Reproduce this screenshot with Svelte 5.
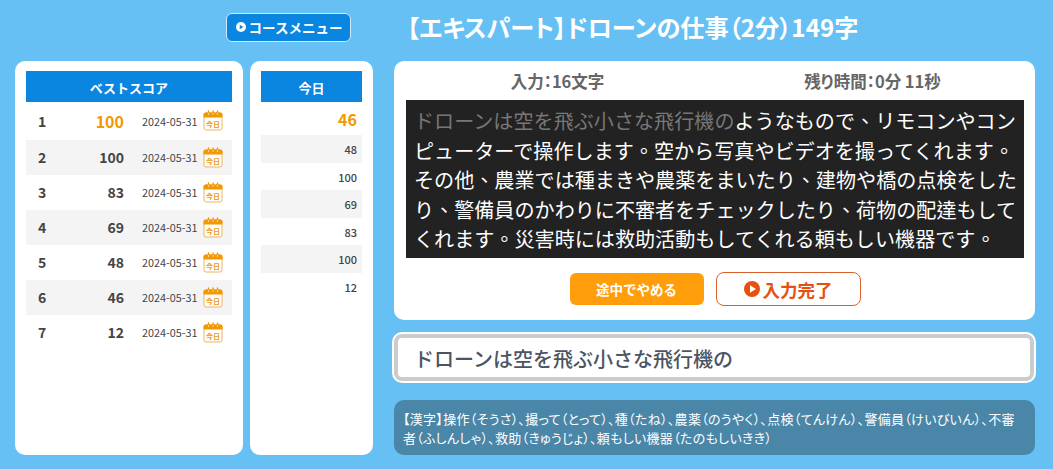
<script>
  const best = [
    [1, 100], [2, 100], [3, 83], [4, 69], [5, 48], [6, 46], [7, 12]
  ];
  const today = [48, 100, 69, 83, 100, 12];
</script>

{#snippet cal()}
  <svg class="cal" viewBox="0 0 20 21" width="20" height="21" aria-hidden="true">
    <rect x="1" y="3" width="18" height="17" rx="2" fill="#fff" stroke="#efb55a" stroke-width="1" />
    <path d="M.5 7.500V4.500Q.5 2.500 2.500 2.500H17.500Q19.500 2.500 19.500 4.500V7.500Z" fill="#f39800" />
    <path d="M5.500 1V4M10 1V4M14.500 1V4" stroke="#f39800" stroke-width="1.400" stroke-linecap="round" />
    <path d="M5.500 3V5M10 3V5M14.500 3V5" stroke="#fff" stroke-width=".6" />
    <text x="10" y="16.500" text-anchor="middle" class="caltext">今日</text>
  </svg>
{/snippet}

<div class="page">
  <header class="top">
    <button class="menu">
      <svg viewBox="0 0 12 12" width="10" height="10" aria-hidden="true">
        <circle cx="6" cy="6" r="6" fill="#fff" />
        <path d="M4.500 3.300L8.800 6L4.500 8.700Z" fill="#0a85e0" />
      </svg>
      コースメニュー
    </button>
    <h1>【エキスパート】ドローンの仕事（2分）149字</h1>
  </header>

  <div class="body">
    <section class="card scores">
      <div class="head">ベストスコア</div>
      {#each best as [rank, score], i}
        <div class="row" class:first={i === 0}>
          <span class="rank">{rank}</span>
          <span class="score">{score}</span>
          <span class="date">2024-05-31</span>
          {@render cal()}
        </div>
      {/each}
    </section>

    <section class="card todays">
      <div class="head">今日</div>
      <div class="tfirst">46</div>
      {#each today as v}
        <div class="trow">{v}</div>
      {/each}
    </section>

    <main class="right">
      <section class="card game">
        <div class="stats">
          <span>入力：16文字</span>
          <span>残り時間：0分 11秒</span>
        </div>
        <p class="text" lang="zh-Hant"><span class="done">ドローンは空を飛ぶ小さな飛行機の</span>ようなもので、リモコンやコンピューターで操作します。空から写真やビデオを撮ってくれます。その他、農業では種まきや農薬をまいたり、建物や橋の点検をしたり、警備員のかわりに不審者をチェックしたり、荷物の配達もしてくれます。災害時には救助活動もしてくれる頼もしい機器です。</p>
        <div class="actions">
          <button class="stop">途中でやめる</button>
          <button class="finish">
            <svg viewBox="0 0 16 16" width="16" height="16" aria-hidden="true">
              <circle cx="8" cy="8" r="8" fill="#e8500f" />
              <path d="M6 4.200L12 8L6 11.800Z" fill="#fff" />
            </svg>
            入力完了
          </button>
        </div>
      </section>

      <div class="input">ドローンは空を飛ぶ小さな飛行機の</div>

      <div class="kanji">【漢字】操作（そうさ）、撮って（とって）、種（たね）、農薬（のうやく）、点検（てんけん）、警備員（けいびいん）、不審者（ふしんしゃ）、救助（きゅうじょ）、頼もしい機器（たのもしいきき）</div>
    </main>
  </div>
</div>

<style>
  :global(body) {
    margin: 0;
    background: #67c0f3;
  }
  .page {
    width: 1053px;
    height: 469px;
    overflow: hidden;
    font-family: "Noto Sans CJK JP", "Noto Sans", sans-serif;
    color: #444;
    box-sizing: border-box;
    padding-top: 12px;
  }
  .top {
    display: flex;
    align-items: center;
    height: 30px;
    padding-left: 226px;
  }
  button {
    font-family: inherit;
    cursor: pointer;
  }
  .menu {
    width: 125px;
    height: 29px;
    box-sizing: border-box;
    display: flex;
    align-items: center;
    justify-content: center;
    gap: 3px;
    padding: 0 0 0 1px;
    background: #0a85e0;
    border: 1px solid #cfeaff;
    border-radius: 6px;
    color: #fff;
    font-size: 13.500px;
    font-weight: 700;
  }
  h1 {
    margin: 0 0 0 56px;
    color: #fff;
    font-size: 24.200px;
    font-weight: 700;
    line-height: 32px;
    font-feature-settings: "palt";
    white-space: nowrap;
  }
  .body {
    display: flex;
    margin-top: 19px;
    padding-left: 15px;
  }
  .card {
    background: #fff;
    border-radius: 10px;
    box-sizing: border-box;
  }
  .scores {
    width: 228px;
    height: 394px;
    padding: 10px 11px;
  }
  .todays {
    width: 123px;
    height: 394px;
    margin-left: 7px;
    padding: 10px 11px;
  }
  .head {
    height: 31px;
    background: #0a85e0;
    color: #fff;
    font-size: 13px;
    font-weight: 700;
    line-height: 33px;
    text-align: center;
  }
  .row {
    display: flex;
    align-items: center;
    height: 35px;
    box-sizing: border-box;
    padding-bottom: 1px;
    padding-right: 8px;
  }
  .row.first {
    height: 38px;
  }
  .row:nth-child(odd) {
    background: #f4f4f4;
  }
  .rank {
    flex: none;
    width: 32px;
    padding-left: 12px;
    box-sizing: border-box;
    font-size: 14px;
    font-weight: 700;
  }
  .score {
    flex: none;
    width: 66px;
    text-align: right;
    font-size: 14px;
    font-weight: 700;
  }
  .first .score {
    color: #f39800;
    font-size: 16px;
  }
  .date {
    margin-left: 18px;
    font-size: 10.800px;
    width: 61px;
    flex: none;
  }
  .cal {
    margin-left: 0;
    flex: none;
  }
  .caltext {
    font-size: 7px;
    font-weight: 700;
    fill: #e89a20;
  }
  .tfirst {
    height: 33px;
    line-height: 34px;
    text-align: right;
    padding-right: 5px;
    color: #f39800;
    font-size: 16px;
    font-weight: 700;
  }
  .trow {
    height: 27.500px;
    line-height: 28px;
    text-align: right;
    padding-right: 5px;
    font-size: 11px;
    font-weight: 500;
  }
  .trow:nth-child(odd) {
    background: #f4f4f4;
  }
  .right {
    width: 641px;
    margin-left: 21px;
  }
  .game {
    height: 259px;
    padding: 0 11px 0 12px;
  }
  .stats {
    display: flex;
    justify-content: center;
    gap: 2px;
    height: 39px;
    align-items: center;
    color: #666;
    font-size: 16.500px;
    font-weight: 700;
    font-feature-settings: "palt";
  }
  .stats span {
    flex: none;
    width: 313px;
    text-align: center;
  }
  .text {
    margin: 0;
    height: 158px;
    box-sizing: border-box;
    padding: 6px 4px 0 8px;
    background: #222;
    color: #fff;
    font-family: "Noto Sans CJK TC", "Noto Sans CJK JP", sans-serif;
    font-size: 20.100px;
    line-height: 29.500px;
  }
  .done {
    color: #777;
  }
  .actions {
    display: flex;
    justify-content: center;
    align-items: center;
    gap: 12px;
    margin-top: 14px;
  }
  .stop {
    width: 134px;
    height: 32px;
    background: #ff9d0a;
    border: 0;
    border-radius: 6px;
    color: #fff;
    font-size: 13.500px;
    font-weight: 700;
  }
  .finish {
    width: 145px;
    height: 34px;
    display: flex;
    align-items: center;
    justify-content: center;
    gap: 3px;
    padding: 0;
    background: #fff;
    border: 1px solid #d9602a;
    border-radius: 8px;
    color: #e8500f;
    font-size: 17.500px;
    font-weight: 700;
  }
  .input {
    height: 47px;
    width: 640px;
    margin: 14px 0 0;
    box-sizing: border-box;
    background: #fff;
    border: 4px solid #ccc;
    box-shadow: 0 0 0 2px #fff;
    border-radius: 8px;
    padding-left: 16px;
    color: #4b5563;
    font-size: 20px;
    font-weight: 500;
    line-height: 42px;
  }
  .kanji {
    height: 55px;
    margin-top: 19px;
    box-sizing: border-box;
    padding: 9px 14px 9px 9px;
    background: #4a86a8;
    border-radius: 10px;
    color: #fff;
    font-size: 13px;
    letter-spacing: .3px;
    line-height: 19px;
    font-feature-settings: "palt";
  }
</style>
